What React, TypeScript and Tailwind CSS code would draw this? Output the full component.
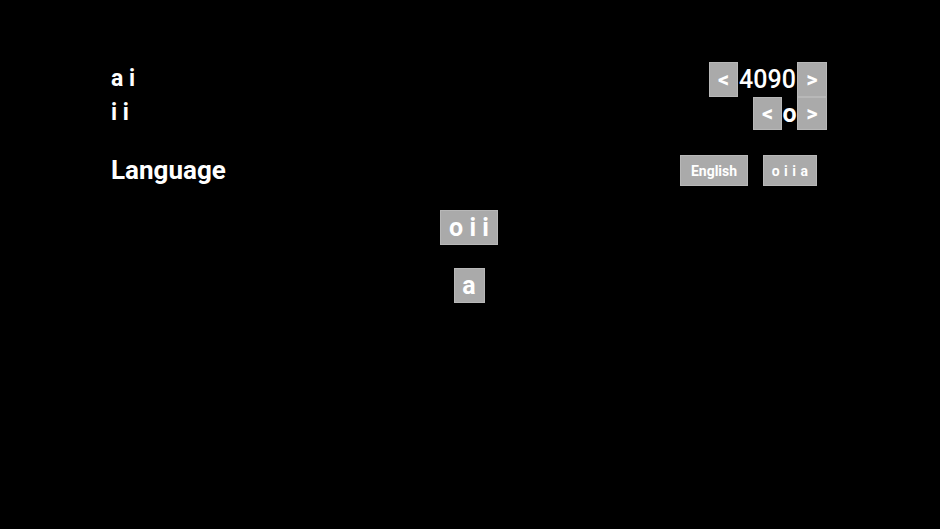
import React from 'react'

const font = { fontFamily: 'Roboto, "Noto Sans", sans-serif' }

function GrayButton({ children, className = '' }: { children: React.ReactNode; className?: string }) {
  return (
    <button
      className={[
        'flex items-center justify-center bg-[#aaaaaa] border border-[#b8b8b8] text-white font-bold leading-none',
        className,
      ].join(' ')}
    >
      {children}
    </button>
  )
}

export default function App() {
  return (
    <div className="w-[940px] h-[529px] bg-black text-white overflow-hidden" style={font}>
      <div className="pl-[111px] pr-[113px] pt-[62px]">
        {/* Stepper rows */}
        <div className="flex items-center justify-between h-[35px]">
          <span className="text-[23px] font-bold">a i</span>
          <div className="flex items-center h-full">
            <GrayButton className="w-[29px] h-full text-[22px]">&lt;</GrayButton>
            <span className="text-[25px] font-medium w-[59px] text-center">4090</span>
            <GrayButton className="w-[30px] h-full text-[22px]">&gt;</GrayButton>
          </div>
        </div>
        <div className="flex items-center justify-between h-[33px]">
          <span className="text-[23px] font-bold">i i</span>
          <div className="flex items-center h-full">
            <GrayButton className="w-[29px] h-full text-[22px]">&lt;</GrayButton>
            <span className="text-[25px] font-bold w-[15px] text-center">o</span>
            <GrayButton className="w-[30px] h-full text-[22px]">&gt;</GrayButton>
          </div>
        </div>

        {/* Language */}
        <div className="flex items-center justify-between h-[31px] mt-[25px] pr-[10px]">
          <span className="text-[26px] font-bold">Language</span>
          <div className="flex items-center gap-[15px] h-full">
            <GrayButton className="w-[68px] h-full text-[14px]">English</GrayButton>
            <GrayButton className="w-[54px] h-full text-[14px] tracking-[0.5px]">o i i a</GrayButton>
          </div>
        </div>
      </div>

      {/* Center actions */}
      <div className="flex flex-col items-center gap-[23px] mt-[24px] pr-[2px]">
        <GrayButton className="w-[58px] h-[35px] text-[25px]">o i i</GrayButton>
        <GrayButton className="w-[31px] h-[35px] text-[25px]">a</GrayButton>
      </div>
    </div>
  )
}
